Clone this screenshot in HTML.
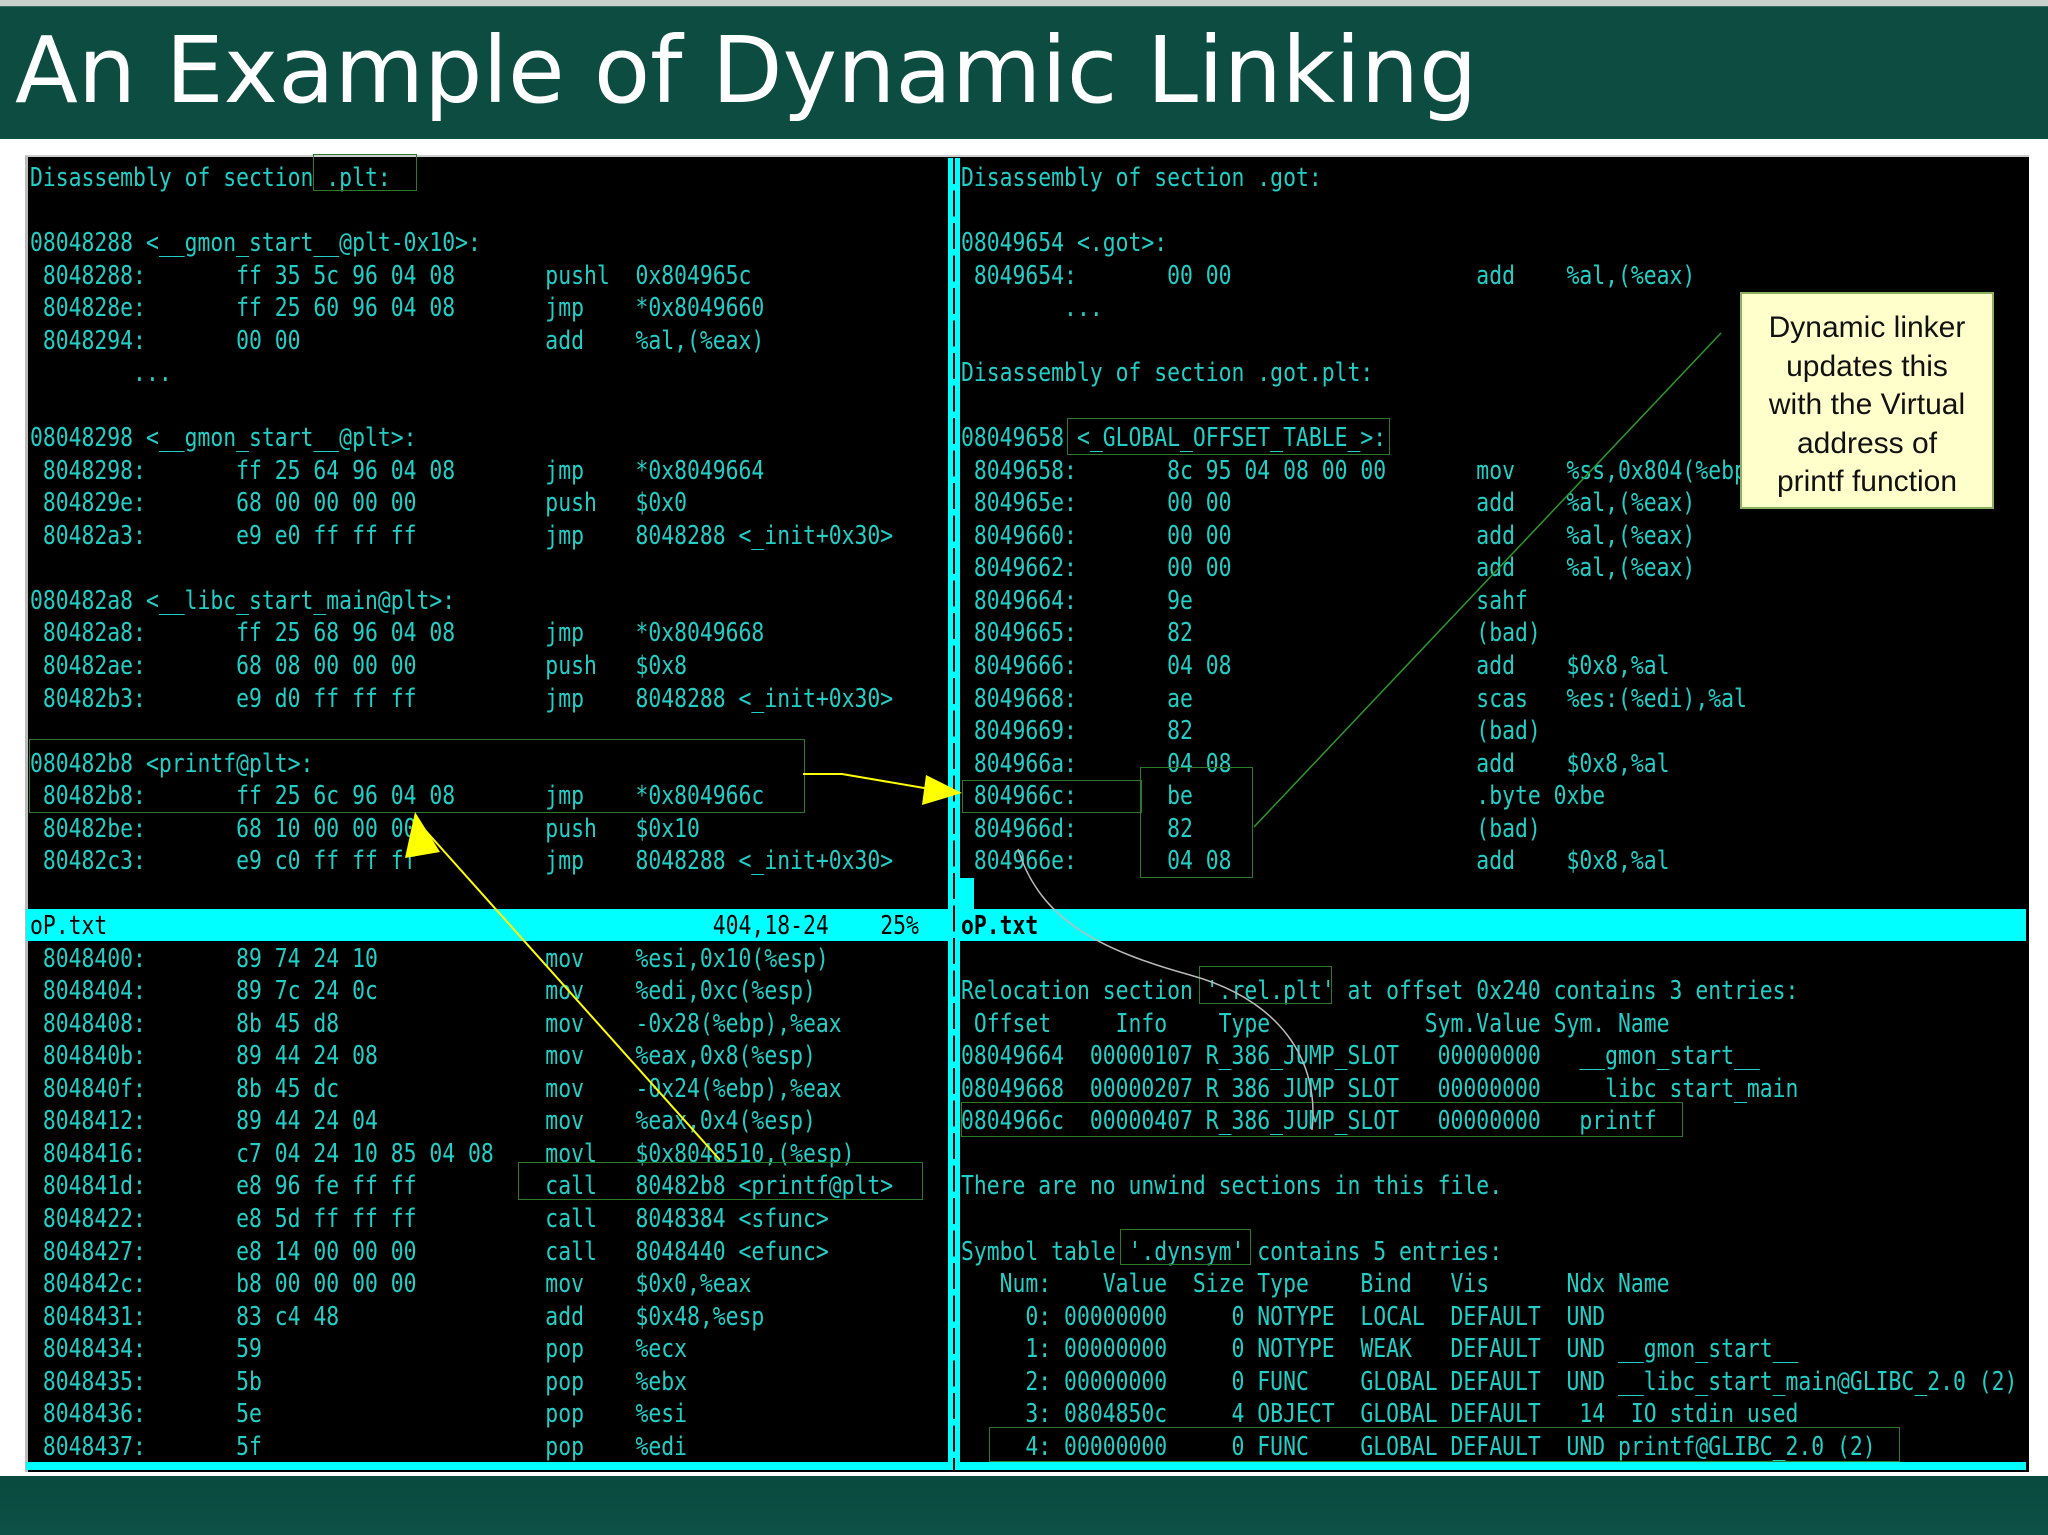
<!DOCTYPE html>
<html><head><meta charset="utf-8"><style>
html,body{margin:0;padding:0}
body{width:2048px;height:1535px;position:relative;overflow:hidden;background:#fff;font-family:"Liberation Sans",sans-serif}
.title{position:absolute;left:0;top:6px;width:2048px;height:132px;background:#0c4c41;border-top:1px solid #3a6a60}
.title span{position:absolute;left:15px;top:10px;font-family:"DejaVu Sans",sans-serif;font-size:92px;color:#fff;white-space:nowrap;letter-spacing:0}
.topline{position:absolute;left:0;top:0;width:2048px;height:6px;background:#c8d0cc}
.term{position:absolute;left:25px;top:155px;width:2001px;height:1315px;background:#000;border-left:3px solid #bbb;border-top:2px solid #ccc}
.bot{position:absolute;left:0;top:1476px;width:2048px;height:59px;background:linear-gradient(#0a4a3f,#0d5045)}
pre{position:absolute;margin:0;font-family:"DejaVu Sans Mono",monospace;font-size:26px;line-height:32.53px;color:#22cfc6;transform:scaleX(0.823);transform-origin:0 0;white-space:pre}
.clip{position:absolute;overflow:hidden}
.status{position:absolute;left:26px;top:909px;width:2000px;height:32px;background:#00ffff}
.div{position:absolute;left:948px;top:158px;width:12px;height:1312px;background:#00ffff}
.div i{position:absolute;left:5px;top:0;width:2px;height:100%;background:repeating-linear-gradient(#000 0 26px,transparent 26px 32.5px)}
.box{position:absolute;border:1.5px solid #2a7a2a}
.note{position:absolute;left:1740px;top:292px;width:254px;height:217px;background:#ffffcc;border:2px solid #8ab060;font-size:30px;line-height:38.5px;text-align:center;color:#111;box-sizing:border-box;padding-top:15px}
</style></head><body>
<div class="topline"></div>
<div class="title"><span>An Example of Dynamic Linking</span></div>
<div class="term"></div>
<div class="status"></div>
<div style="position:absolute;left:26px;top:1462px;width:2000px;height:8px;background:#00ffff"></div>
<div class="bot"></div>

<div class="clip" style="left:28px;top:158px;width:920px;height:1304px">
<pre style="left:2px;top:4px">Disassembly of section .plt:

08048288 &lt;__gmon_start__@plt-0x10&gt;:
 8048288:       ff 35 5c 96 04 08       pushl  0x804965c
 804828e:       ff 25 60 96 04 08       jmp    *0x8049660
 8048294:       00 00                   add    %al,(%eax)
        ...

08048298 &lt;__gmon_start__@plt&gt;:
 8048298:       ff 25 64 96 04 08       jmp    *0x8049664
 804829e:       68 00 00 00 00          push   $0x0
 80482a3:       e9 e0 ff ff ff          jmp    8048288 &lt;_init+0x30&gt;

080482a8 &lt;__libc_start_main@plt&gt;:
 80482a8:       ff 25 68 96 04 08       jmp    *0x8049668
 80482ae:       68 08 00 00 00          push   $0x8
 80482b3:       e9 d0 ff ff ff          jmp    8048288 &lt;_init+0x30&gt;

080482b8 &lt;printf@plt&gt;:
 80482b8:       ff 25 6c 96 04 08       jmp    *0x804966c
 80482be:       68 10 00 00 00          push   $0x10
 80482c3:       e9 c0 ff ff ff          jmp    8048288 &lt;_init+0x30&gt;

<span style="color:#000">oP.txt                                               404,18-24    25%</span>
 8048400:       89 74 24 10             mov    %esi,0x10(%esp)
 8048404:       89 7c 24 0c             mov    %edi,0xc(%esp)
 8048408:       8b 45 d8                mov    -0x28(%ebp),%eax
 804840b:       89 44 24 08             mov    %eax,0x8(%esp)
 804840f:       8b 45 dc                mov    -0x24(%ebp),%eax
 8048412:       89 44 24 04             mov    %eax,0x4(%esp)
 8048416:       c7 04 24 10 85 04 08    movl   $0x8048510,(%esp)
 804841d:       e8 96 fe ff ff          call   80482b8 &lt;printf@plt&gt;
 8048422:       e8 5d ff ff ff          call   8048384 &lt;sfunc&gt;
 8048427:       e8 14 00 00 00          call   8048440 &lt;efunc&gt;
 804842c:       b8 00 00 00 00          mov    $0x0,%eax
 8048431:       83 c4 48                add    $0x48,%esp
 8048434:       59                      pop    %ecx
 8048435:       5b                      pop    %ebx
 8048436:       5e                      pop    %esi
 8048437:       5f                      pop    %edi</pre>
</div>

<div class="clip" style="left:960px;top:158px;width:1066px;height:1304px">
<pre style="left:1px;top:4px">Disassembly of section .got:

08049654 &lt;.got&gt;:
 8049654:       00 00                   add    %al,(%eax)
        ...

Disassembly of section .got.plt:

08049658 &lt;_GLOBAL_OFFSET_TABLE_&gt;:
 8049658:       8c 95 04 08 00 00       mov    %ss,0x804(%ebp)
 804965e:       00 00                   add    %al,(%eax)
 8049660:       00 00                   add    %al,(%eax)
 8049662:       00 00                   add    %al,(%eax)
 8049664:       9e                      sahf
 8049665:       82                      (bad)
 8049666:       04 08                   add    $0x8,%al
 8049668:       ae                      scas   %es:(%edi),%al
 8049669:       82                      (bad)
 804966a:       04 08                   add    $0x8,%al
 804966c:       be                      .byte 0xbe
 804966d:       82                      (bad)
 804966e:       04 08                   add    $0x8,%al

<b style="color:#000">oP.txt</b>

Relocation section '.rel.plt' at offset 0x240 contains 3 entries:
 Offset     Info    Type            Sym.Value Sym. Name
08049664  00000107 R_386_JUMP_SLOT   00000000   __gmon_start__
08049668  00000207 R_386_JUMP_SLOT   00000000   __libc_start_main
0804966c  00000407 R_386_JUMP_SLOT   00000000   printf

There are no unwind sections in this file.

Symbol table '.dynsym' contains 5 entries:
   Num:    Value  Size Type    Bind   Vis      Ndx Name
     0: 00000000     0 NOTYPE  LOCAL  DEFAULT  UND
     1: 00000000     0 NOTYPE  WEAK   DEFAULT  UND __gmon_start__
     2: 00000000     0 FUNC    GLOBAL DEFAULT  UND __libc_start_main@GLIBC_2.0 (2)
     3: 0804850c     4 OBJECT  GLOBAL DEFAULT   14 _IO_stdin_used
     4: 00000000     0 FUNC    GLOBAL DEFAULT  UND printf@GLIBC_2.0 (2)</pre>
</div>

<div class="div"><i></i></div>
<div style="position:absolute;left:958px;top:878px;width:16px;height:32px;background:#00ffff"></div>

<div class="box" style="left:313px;top:154px;width:102px;height:35px"></div>
<div class="box" style="left:29px;top:739px;width:774px;height:72px"></div>
<div class="box" style="left:518px;top:1162px;width:403px;height:36px"></div>
<div class="box" style="left:1067px;top:418px;width:321px;height:35px"></div>
<div class="box" style="left:962px;top:780px;width:178px;height:31px"></div>
<div class="box" style="left:1140px;top:767px;width:111px;height:109px"></div>
<div class="box" style="left:1199px;top:966px;width:131px;height:36px"></div>
<div class="box" style="left:961px;top:1102px;width:720px;height:33px"></div>
<div class="box" style="left:1120px;top:1229px;width:129px;height:34px"></div>
<div class="box" style="left:989px;top:1427px;width:909px;height:33px"></div>

<svg style="position:absolute;left:0;top:0" width="2048" height="1535">
<path d="M803 774 L842 774 L930 789" stroke="#ffff00" stroke-width="2" fill="none"/>
<polygon points="962,793 926,775 922,805" fill="#ffff00"/>
<path d="M720 1160 L425 830" stroke="#ffff00" stroke-width="2" fill="none"/>
<polygon points="415,812 405,858 440,852" fill="#ffff00"/>
<path d="M1721 333 L1254 827" stroke="#2a9a2a" stroke-width="1.5"/>
<path d="M1018 849 C1040 920 1100 950 1190 975 S1320 1060 1312 1130" stroke="#bbb" stroke-width="1.5" fill="none"/>
</svg>

<div class="note">Dynamic linker<br>updates this<br>with the Virtual<br>address of<br>printf function</div>
</body></html>
